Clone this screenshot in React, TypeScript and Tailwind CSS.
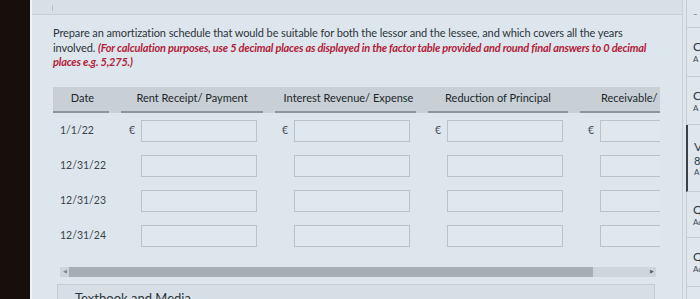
import React from "react";

const rows = ["1/1/22", "12/31/22", "12/31/23", "12/31/24"];

function Cell({ euro }: { euro: boolean }) {
  return (
    <div className="flex w-[153px] shrink-0 items-center">
      <span className="w-[22px] pl-[10px] text-[10.5px] text-[#4a555c]">{euro ? "€" : ""}</span>
      <div className="h-[22px] w-[116px] border border-[#b9c3c9] bg-[#dfe8ee]" />
    </div>
  );
}

function SideItem({ big, small, extra, active, h }: { big: string; small: string; extra?: string; active?: boolean; h: string }) {
  return (
    <div className={`${h} flex shrink-0 flex-col justify-center border-b border-[#c3ccd2] pl-[6px] ${active ? "border-l-2 border-l-[#3a4046]" : "border-l border-l-[#c3ccd2]"}`}>
      <span className="text-[12px] leading-[15px] text-[#2a3a48]">{big}</span>
      {extra && <span className="text-[11px] leading-[13px] text-[#2a3a48]">{extra}</span>}
      <span className="text-[8px] leading-[11px] text-[#3a4a55]">{small}</span>
    </div>
  );
}

export default function App() {
  return (
    <div className="flex h-[299px] w-[700px] overflow-hidden bg-[#dde6ec] font-['Lato',sans-serif] text-[#2c353b]">
      {/* dark bezel */}
      <div className="w-[30px] shrink-0 bg-[#170f0b]" />

      {/* main panel */}
      <div className="flex w-[653px] shrink-0 flex-col border-l-2 border-l-[#eef3f6] border-r border-r-[#c8d1d7]">
        <div className="h-[15px] shrink-0 border-b border-[#c6cfd5] bg-[#d7e0e6] pl-[20px]">
          <div className="mt-[5px] h-[6px] w-px bg-[#b9c2c8]" />
        </div>

        <div className="w-[623px] shrink-0 pl-[21px] pt-[11px] text-[11px] leading-[14.5px] tracking-[-0.1px]">
          <p>
            Prepare an amortization schedule that would be suitable for both the lessor and the lessee, and which covers all the years
            involved.{" "}
            <span className="font-bold italic tracking-[-0.2px] text-[#b3213a]">
              (For calculation purposes, use 5 decimal places as displayed in the factor table provided and round final answers to 0 decimal places e.g. 5,275.)
            </span>
          </p>
        </div>

        {/* table */}
        <div className="ml-[21px] mt-[17px] w-[607px] shrink-0 overflow-hidden">
          <div className="flex h-[26px] w-max bg-[#c8d0d5] text-[11px] text-[#20272c]">
            <div className="mr-[12px] flex w-[56px] items-center justify-center border-b-2 border-[#8d969c] pl-[3px]">Date</div>
            <div className="mr-[12px] flex w-[142px] items-center justify-center border-b-2 border-[#8d969c]">Rent Receipt/ Payment</div>
            <div className="mr-[12px] flex w-[141px] items-center justify-center border-b-2 border-[#8d969c] pl-[6px]">Interest Revenue/ Expense</div>
            <div className="mr-[12px] flex w-[140px] items-center justify-center border-b-2 border-[#8d969c]">Reduction of Principal</div>
            <div className="flex w-[140px] items-center border-b-2 border-[#8d969c] pl-[21px]">Receivable/ Payable</div>
          </div>

          <div className="mt-[7px] flex flex-col gap-[13px]">
            {rows.map((d, i) => (
              <div key={d} className="flex h-[22px] w-max items-center">
                <div className="w-[66px] shrink-0 pl-[7px] text-[10.5px] text-[#3a444a]">{d}</div>
                <Cell euro={i === 0} />
                <Cell euro={i === 0} />
                <Cell euro={i === 0} />
                <Cell euro={i === 0} />
              </div>
            ))}
          </div>
        </div>

        {/* scrollbar */}
        <div className="ml-[28px] mt-[20px] flex h-[10px] w-[596px] shrink-0 items-center bg-[#cdd5da]">
          <span className="w-[9px] text-center text-[5px] text-[#7b858b]">◀</span>
          <div className="h-[10px] w-[524px] bg-[#a6aeb3]" />
          <div className="flex-1" />
          <span className="w-[9px] text-center text-[5px] text-[#555e63]">▶</span>
        </div>

        <div className="ml-[25px] mt-[7px] h-[30px] w-[598px] shrink-0 border border-[#c4cdd3] bg-[#d6dfe5] pl-[17px] pt-[4px] text-[13px] text-[#2c353b]">
          Textbook and Media
        </div>
      </div>

      <div className="w-[3px] shrink-0" />

      {/* right sidebar */}
      <div className="flex flex-1 flex-col bg-[#dfe7ec]">
        <div className="h-[28px] shrink-0 border-b border-l border-[#c3ccd2] pl-[6px] pt-[8px] text-[8px] text-[#556]">–</div>
        <SideItem h="h-[49px]" big="C" small="A" />
        <SideItem h="h-[48px]" big="C" small="A" />
        <SideItem h="h-[67px]" big="V" extra="8" small="A" active />
        <SideItem h="h-[46px]" big="Q" small="Ac" />
        <SideItem h="h-[49px]" big="Q" small="Ac" />
        <div className="flex-1 border-l border-[#c3ccd2]" />
      </div>
    </div>
  );
}
